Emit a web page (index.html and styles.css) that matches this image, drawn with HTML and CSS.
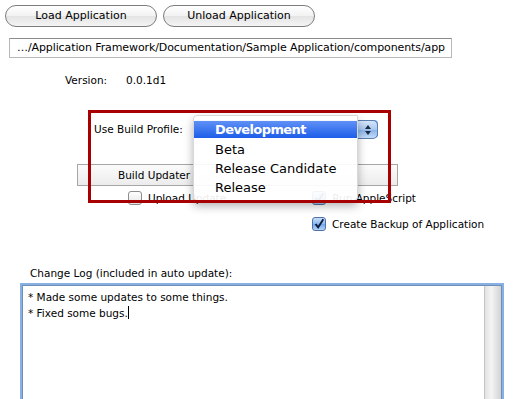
FILE: index.html
```html
<!DOCTYPE html>
<html lang="en">
<head>
    <meta charset="UTF-8">
    <title>Build Updater</title>
    <link rel="stylesheet" href="styles.css">
</head>
<body>
    <div class="toolbar">
        <div class="pill">Load Application</div>
        <div class="pill">Unload Application</div>
    </div>

    <div class="path">…/Application Framework/Documentation/Sample Application/components/app</div>

    <div class="version">
        <span class="version-label">Version:</span>
        <span class="version-value">0.0.1d1</span>
    </div>

    <div class="profile">
        <span class="profile-label">Use Build Profile:</span>
        <div class="popup">
            <div class="stepper">
                <svg width="8" height="12" viewBox="0 0 8 12">
                    <path d="M4 1 L7 5 L1 5 Z" fill="#1c2a3c"/>
                    <path d="M4 11 L7 7 L1 7 Z" fill="#1c2a3c"/>
                </svg>
            </div>
        </div>
    </div>

    <div class="build-bar">Build Updater</div>

    <div class="check-row first">
        <label class="check upload"><span class="box"></span>Upload Update</label>
        <label class="check right"><span class="box on">
            <svg width="14" height="14" viewBox="0 0 14 14"><path d="M3 7 L6 11 L12 1.5" stroke="#0c1e3a" stroke-width="2.2" fill="none"/></svg>
        </span>Run AppleScript</label>
    </div>
    <div class="check-row">
        <label class="check right"><span class="box on">
            <svg width="14" height="14" viewBox="0 0 14 14"><path d="M3 7 L6 11 L12 1.5" stroke="#0c1e3a" stroke-width="2.2" fill="none"/></svg>
        </span>Create Backup of Application</label>
    </div>

    <div class="log-label">Change Log (included in auto update):</div>
    <div class="log">
        <div class="log-text">* Made some updates to some things.<br>* Fixed some bugs.<span class="caret"></span></div>
        <div class="scroll-track"></div>
    </div>

    <!-- open popup menu and the annotation frame sit over the form -->
    <div class="menu">
        <div class="menu-item selected">Development</div>
        <div class="menu-item">Beta</div>
        <div class="menu-item">Release Candidate</div>
        <div class="menu-item">Release</div>
    </div>
    <div class="frame"></div>
</body>
</html>
```

FILE: styles.css
```css
body {
    margin: 0;
    padding: 0;
    background-color: #ffffff;
    color: #000;
    font-family: "DejaVu Sans", sans-serif;
    font-size: 10.5px;
    overflow: hidden;
    height: 399px;
}

.toolbar {
    display: flex;
    gap: 6px;
    padding: 5px 0 0 5px;
}
.pill {
    box-sizing: border-box;
    width: 152px;
    height: 22px;
    line-height: 20px;
    text-align: center;
    border: 1px solid #7c7c7c;
    border-radius: 11px;
    background: linear-gradient(#ffffff, #f2f2f2 50%, #e4e4e4 51%, #f4f4f4);
    font-size: 11px;
}

.path {
    box-sizing: border-box;
    margin: 11px 0 0 9px;
    width: 443px;
    height: 20px;
    line-height: 18px;
    padding-left: 7px;
    border: 1px solid #b8b8b8;
    border-top-color: #8c8c8c;
    font-size: 11px;
    letter-spacing: -0.1px;
    white-space: nowrap;
    overflow: hidden;
}

.version {
    display: flex;
    margin-top: 15px;
    padding-left: 65px;
    line-height: 14px;
}
.version-label {
    width: 61px;
}

.profile {
    display: flex;
    align-items: center;
    margin-top: 33px;
    padding-left: 94px;
    height: 18px;
}
.profile-label {
    width: 99px;
}
.popup {
    position: relative;
    width: 185px;
    height: 18px;
    border-radius: 4px;
    background: linear-gradient(#6f9cf3, #2a66e0);
}
.stepper {
    position: absolute;
    right: 0;
    top: 0;
    box-sizing: border-box;
    width: 21px;
    height: 19px;
    border: 1px solid #5b7fae;
    border-radius: 0 5px 5px 0;
    background: linear-gradient(#d6e6fb, #a9c8ef 50%, #86b2ea 51%, #c2dcf8);
    display: flex;
    align-items: center;
    justify-content: center;
}

.build-bar {
    box-sizing: border-box;
    margin: 26px 0 0 77px;
    width: 321px;
    height: 22px;
    line-height: 20px;
    padding-left: 40px;
    border: 1px solid #a6a6a6;
    background: linear-gradient(#fbfbfb, #ececec);
}

.check-row {
    display: flex;
    margin-top: 5px;
    height: 14px;
    line-height: 14px;
}
.check-row + .check-row {
    margin-top: 12px;
}
.check {
    display: flex;
    align-items: center;
    gap: 6px;
}
.check.upload {
    margin-left: 128px;
}
.check-row.first .check.right {
    margin-left: 86px;
}
.check-row .check.right:only-child {
    margin-left: 312px;
}
.box {
    box-sizing: border-box;
    width: 14px;
    height: 14px;
    border: 1px solid #8d8d8d;
    border-radius: 3px;
    background: linear-gradient(#ffffff, #e6e6e6);
    display: flex;
    align-items: center;
    justify-content: center;
}
.box.on {
    border-color: #4d73a8;
    background: linear-gradient(#c9def8, #8ab7ef 50%, #6fa3e8 51%, #b6d5f7);
}

.log-label {
    margin: 35px 0 0 30px;
    line-height: 14px;
}
.log {
    position: relative;
    box-sizing: border-box;
    margin: 3px 0 0 20px;
    width: 484px;
    height: 116px;
    border: 2px solid #88b0e2;
    border-bottom: none;
    box-shadow: inset 1px 1px 0 0 #6e8fbc, inset -1px 0 0 0 #6e8fbc;
}
.log-text {
    padding: 4px 0 0 6px;
    line-height: 16px;
}
.caret {
    display: inline-block;
    width: 1px;
    height: 13px;
    background: #000;
    vertical-align: -2px;
}
.scroll-track {
    position: absolute;
    top: 1px;
    right: 1px;
    bottom: 0;
    width: 16px;
    background: linear-gradient(to right, #e2e2e2, #f4f4f4 40%, #d2d2d2);
    border-left: 1px solid #c4c4c4;
}

.menu {
    position: absolute;
    left: 193px;
    top: 115px;
    box-sizing: border-box;
    width: 165px;
    height: 86px;
    padding-top: 5px;
    background: rgba(255, 255, 255, 0.92);
    border: 1px solid #d8d8d8;
    border-radius: 4px 0 4px 4px;
    box-shadow: 0 5px 10px rgba(0, 0, 0, 0.3);
    font-size: 13px;
}
.menu-item {
    height: 19px;
    line-height: 19px;
    padding-left: 21px;
}
.menu-item.selected {
    height: 17px;
    line-height: 17px;
    margin-bottom: 2px;
    color: #fff;
    font-weight: bold;
    letter-spacing: -0.6px;
    background: linear-gradient(#5f90f5, #1d5ee9);
}

.frame {
    position: absolute;
    left: 88px;
    top: 110px;
    width: 303px;
    height: 93px;
    box-sizing: border-box;
    border: 3px solid #a80000;
}
```
